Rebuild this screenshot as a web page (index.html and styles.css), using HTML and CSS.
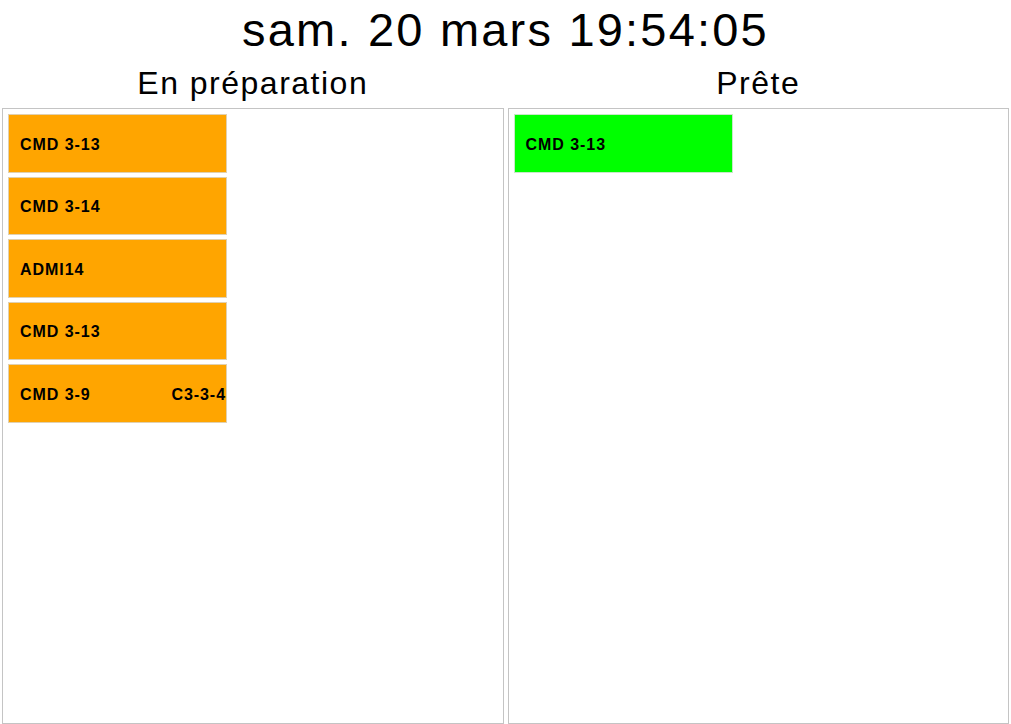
FILE: index.html
```html
<!DOCTYPE html>
<html lang="fr">
<head>
<meta charset="utf-8">
<title>Commandes</title>
<link rel="stylesheet" href="styles.css">
</head>
<body>
<h1 class="clock">sam. 20 mars 19:54:05</h1>
<div class="board">
  <section class="column">
    <h2 class="column-title">En préparation</h2>
    <div class="panel">
      <div class="order order-pending"><span>CMD 3-13</span></div>
      <div class="order order-pending"><span>CMD 3-14</span></div>
      <div class="order order-pending"><span>ADMI14</span></div>
      <div class="order order-pending"><span>CMD 3-13</span></div>
      <div class="order order-pending"><span>CMD 3-9</span><span class="order-table">C3-3-4</span></div>
    </div>
  </section>
  <section class="column">
    <h2 class="column-title">Prête</h2>
    <div class="panel">
      <div class="order order-ready"><span>CMD 3-13</span></div>
    </div>
  </section>
</div>
</body>
</html>
```
FILE: styles.css
```css
html, body {
  margin: 0;
  padding: 0;
  background: #fff;
  color: #000;
  font-family: "Liberation Sans", Arial, sans-serif;
}

.clock {
  margin: 0;
  padding-top: 5px;
  font-size: 47px;
  font-weight: normal;
  letter-spacing: 2.2px;
  line-height: 50px;
  text-align: center;
}

.board {
  display: flex;
  gap: 4px;
  padding: 0 2px;
}

.column {
  flex: 1 1 0;
  display: flex;
  flex-direction: column;
}

.column-title {
  margin: 0;
  padding-top: 4px;
  font-size: 32px;
  font-weight: normal;
  letter-spacing: 1.5px;
  line-height: 49px;
  text-align: center;
}

.panel {
  box-sizing: border-box;
  height: 616px;
  border: 1px solid #c4c4c4;
  padding: 5px;
}

.order {
  box-sizing: border-box;
  width: 219px;
  height: 58.5px;
  margin-bottom: 4px;
  border: 1px solid #e0d0b0;
  display: flex;
  align-items: center;
  justify-content: space-between;
  padding-left: 11px;
  padding-top: 3px;
  font-size: 16px;
  font-weight: bold;
  letter-spacing: 0.95px;
}

.order-pending {
  background: #ffa500;
}

.order-ready {
  background: #00ff00;
  border-color: #c8e8c8;
}
```
